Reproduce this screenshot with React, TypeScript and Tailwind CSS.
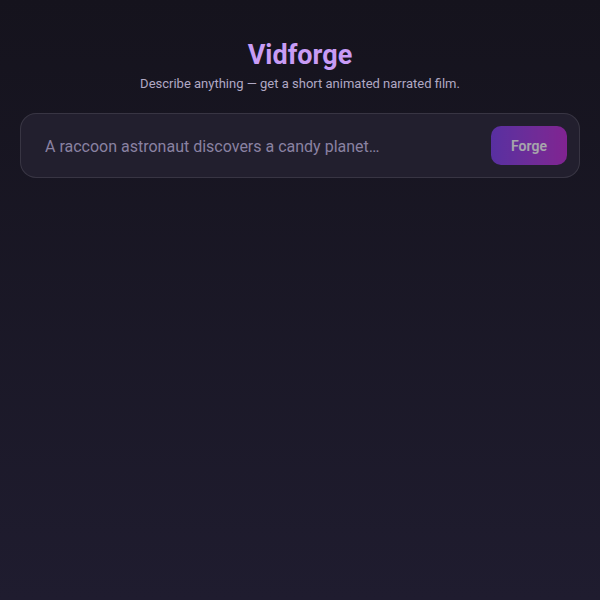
import * as React from 'react';

export default function App() {
  const [prompt, setPrompt] = React.useState('');

  return (
    <div className="min-h-screen bg-gradient-to-b from-[#15131d] to-[#1f1c2f] px-5 pt-[38px] font-['Roboto',sans-serif]">
      <h1 className="text-center text-[27px] font-bold leading-[34px] text-[#c89cf5]">Vidforge</h1>
      <p className="mt-[3px] text-center text-[13px] leading-[18px] text-[#b0a8c4]">
        Describe anything — get a short animated narrated film.
      </p>

      <div className="mt-[20px] flex items-center gap-3 rounded-2xl border border-white/10 bg-[#221f2e] py-3 pl-6 pr-3">
        <input
          value={prompt}
          onChange={e => setPrompt(e.target.value)}
          placeholder="A raccoon astronaut discovers a candy planet…"
          className="min-w-0 flex-1 bg-transparent pt-[2px] text-[16px] text-[#e8e4f0] outline-none placeholder:text-[#8a82a2]"
        />
        <button
          disabled={!prompt.trim()}
          className="h-[39px] w-[76px] rounded-[10px] bg-gradient-to-r from-[#7c3aed] to-[#c026d3] pt-[1px] text-[14px] font-semibold text-white disabled:opacity-60"
        >
          Forge
        </button>
      </div>
    </div>
  );
}
